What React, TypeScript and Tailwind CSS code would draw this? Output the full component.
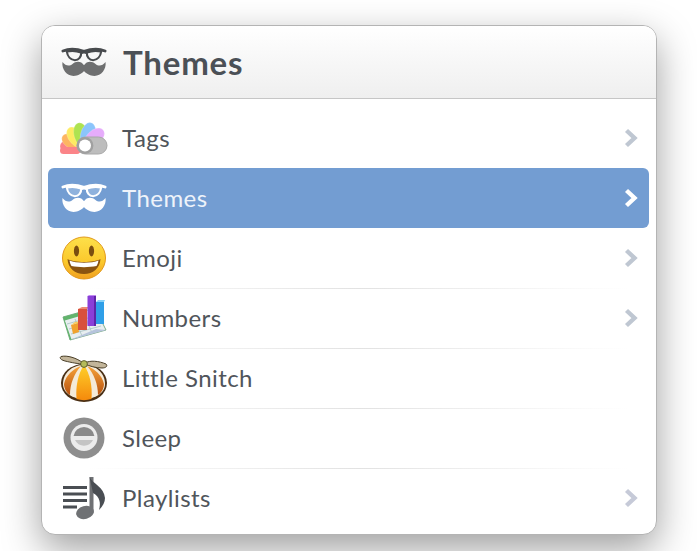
import React from 'react';

const MustacheIcon = ({ color, glasses, lens }: { color: string; glasses: string; lens: string }) => (
  <svg width="46" height="30" viewBox="0 0 48 31">
    {/* glasses */}
    <path d="M2 4C9 1.2 18 2.4 24 4.4C30 2.4 39 1.2 46 4" fill="none" stroke={glasses} strokeWidth="3" strokeLinecap="round" />
    <path d="M6 4.5C11 3.4 17 4 21 5.6C21.4 10 18.6 13.6 14.5 13.6C10 13.6 6.8 9.6 6 4.5Z" fill={lens} stroke={glasses} strokeWidth="2.2" />
    <path d="M42 4.5C37 3.4 31 4 27 5.6C26.6 10 29.4 13.6 33.5 13.6C38 13.6 41.2 9.6 42 4.5Z" fill={lens} stroke={glasses} strokeWidth="2.2" />
    <path d="M21 6.5Q24 5 27 6.5" fill="none" stroke={glasses} strokeWidth="2" />
    {/* mustache */}
    <path d="M24 19C21 14 15.5 14.5 12 17.5C9 20 5 20 1.5 15.5C0.5 23 6 30 13 30C18 30 22 27.5 24 25C26 27.5 30 30 35 30C42 30 47.5 23 46.5 15.5C43 20 39 20 36 17.5C32.5 14.5 27 14 24 19Z" fill={color} />
  </svg>
);

const petals = [
  { angle: -88, fill: '#fb8488' },
  { angle: -66, fill: '#fdb561' },
  { angle: -42, fill: '#fdeb62' },
  { angle: -16, fill: '#aee350' },
  { angle: 14, fill: '#8bc5fb' },
  { angle: 46, fill: '#e6acfb' },
];

const TagsIcon = () => (
  <svg width="48" height="33" viewBox="0 0 48 33">
    {petals.map((p) => (
      <ellipse key={p.fill} cx="25" cy="12.5" rx="7.5" ry="12.5" fill={p.fill} stroke="#ffffff" strokeOpacity="0.35" strokeWidth="0.5" transform={`rotate(${p.angle} 25 25)`} />
    ))}
    <rect x="0" y="25" width="20" height="7" rx="3.5" fill="#fb8488" />
    <rect x="17" y="15" width="30" height="17" rx="8.5" fill="#bdbdbd" stroke="#a8a8a8" />
    <circle cx="25" cy="23.5" r="8.4" fill="#a0a0a0" />
    <circle cx="25" cy="23.5" r="6" fill="#ffffff" />
  </svg>
);

const EmojiIcon = () => (
  <svg width="46" height="44" viewBox="0 0 46 44">
    <defs>
      <linearGradient id="emojiFace" x1="0" y1="0" x2="0" y2="1">
        <stop offset="0" stopColor="#fde04a" />
        <stop offset="0.6" stopColor="#fbc82c" />
        <stop offset="1" stopColor="#f0a020" />
      </linearGradient>
    </defs>
    <ellipse cx="23" cy="22" rx="21.5" ry="21" fill="url(#emojiFace)" stroke="#e29a1c" />
    <ellipse cx="15.5" cy="15" rx="2.6" ry="5.4" fill="#7a4d10" />
    <ellipse cx="30.5" cy="15" rx="2.6" ry="5.4" fill="#7a4d10" />
    <path d="M6.5 23C13 27 33 27 39.5 23C39 32 32 38 23 38C14 38 7 32 6.5 23Z" fill="#8a5410" />
    <path d="M8.5 24.5C15 27.5 31 27.5 37.5 24.5C37 27 36.5 28.5 35.5 30C28 31.5 18 31.5 10.5 30C9.5 28.5 9 27 8.5 24.5Z" fill="#ffffff" />
  </svg>
);

const NumbersIcon = () => (
  <svg width="46" height="46" viewBox="0 0 46 46">
    <path d="M2 22L34 13L45 35L9 45Z" fill="#e8eef0" stroke="#7fae8a" />
    <path d="M2 22L18 17.5L19 21L3.8 25.4L10.5 44.5L9 45Z" fill="#62b46c" />
    <path d="M6 29L34 21M8 34L37 26M10 39L40 31M14 24L21 41M24 21L31 38" stroke="#a7c2c2" strokeWidth="0.8" />
    <path d="M35 34L45 35L9 45Z" fill="#b6c4dc" />
    <path d="M10 30L17 28L18 37L12 39Z" fill="#f0a22e" />
    <path d="M10 30L14 27L21 26L17 28Z" fill="#f8cc5c" />
    <rect x="17" y="14" width="9" height="21" fill="#d8503c" />
    <path d="M17 14L21 12L29 12L26 14Z" fill="#ec8a72" />
    <rect x="26.5" y="1" width="8" height="30" fill="#8a3fd8" />
    <rect x="33" y="1" width="2" height="30" fill="#5f24a8" />
    <path d="M26.5 1L28 0L35 0L35 1Z" fill="#c08af0" />
    <rect x="35" y="7" width="8" height="22" fill="#2f9fe8" />
    <path d="M35 7L37 5L44 5L43 7Z" fill="#84d0f8" />
  </svg>
);

const SnitchIcon = () => (
  <svg width="50" height="47" viewBox="0 0 50 47">
    <defs>
      <linearGradient id="hatCenter" x1="0" y1="0" x2="0" y2="1">
        <stop offset="0" stopColor="#ffd02a" />
        <stop offset="1" stopColor="#f58a0c" />
      </linearGradient>
      <linearGradient id="hatSide" x1="0" y1="0" x2="0" y2="1">
        <stop offset="0" stopColor="#f6a33a" />
        <stop offset="1" stopColor="#b9520e" />
      </linearGradient>
    </defs>
    <ellipse cx="25" cy="28" rx="23" ry="19" fill="#4a2f14" />
    <path d="M4 29C4 18 13 10 25 10C37 10 46 18 46 29C46 38 36 44 25 44C14 44 4 38 4 29Z" fill="#f4ead8" />
    <path d="M22 11C14 14 7 20 5 29C5 34 8 38 11 40C11 29 15 19 22 11Z" fill="url(#hatSide)" />
    <path d="M28 11C36 14 43 20 45 29C45 34 42 38 39 40C39 29 35 19 28 11Z" fill="url(#hatSide)" />
    <path d="M25 10C19 19 16.5 31 17.5 44C22 45.5 28 45.5 32.5 44C33.5 31 31 19 25 10Z" fill="url(#hatCenter)" />
    <path d="M24 8C18 3 8 0 2 1.5C0 3 2 5 6 6C12 7.5 20 9 24 9Z" fill="#c2b59a" stroke="#4a3f28" strokeWidth="1" />
    <path d="M26 8C31 5 40 6 47 9C49 11 47 13 43 13C37 13 30 11 26 9Z" fill="#c2b59a" stroke="#4a3f28" strokeWidth="1" />
    <circle cx="25" cy="9" r="3.4" fill="#b4bb5a" stroke="#4a4a20" strokeWidth="0.8" />
  </svg>
);

const SleepIcon = () => (
  <svg width="42" height="42" viewBox="0 0 42 42">
    <circle cx="21" cy="21" r="20.5" fill="#8e8e8e" />
    <circle cx="21" cy="20.5" r="13.5" fill="#ececec" />
    <path d="M10.6 19A10.5 10.5 0 0 1 31.4 19Z" fill="#8a8a8a" />
    <path d="M12 23H30A10 10 0 0 1 12 23Z" fill="#c4c4c4" />
  </svg>
);

const PlaylistsIcon = () => (
  <svg width="44" height="43" viewBox="0 0 44 43">
    <rect x="1" y="9" width="24" height="3" fill="#4a4e53" />
    <rect x="1" y="15.5" width="24" height="3" fill="#4a4e53" />
    <rect x="1" y="22" width="24" height="3" fill="#4a4e53" />
    <rect x="1" y="28.5" width="14" height="3" fill="#4a4e53" />
    <ellipse cx="23" cy="35.5" rx="9" ry="6.5" fill="#6f7174" transform="rotate(-15 23 35.5)" />
    <rect x="27.5" y="0" width="4" height="36" fill="#6f7174" />
    <path d="M27.5 0C31 7 42 10 43 21C43 25 41 29 37 33C39 26 38 20 31 16Z" fill="#4a4e53" />
  </svg>
);

const Chevron = ({ color }: { color: string }) => (
  <svg width="14" height="20" viewBox="0 0 14 20">
    <path d="M2.5 2.5L10.5 10L2.5 17.5" fill="none" stroke={color} strokeWidth="4.4" />
  </svg>
);

const items = [
  { label: 'Tags', icon: <TagsIcon />, chevron: true },
  { label: 'Themes', icon: <MustacheIcon color="#ffffff" glasses="#ffffff" lens="#8fb2dd" />, chevron: true, active: true },
  { label: 'Emoji', icon: <EmojiIcon />, chevron: true },
  { label: 'Numbers', icon: <NumbersIcon />, chevron: true, line: true },
  { label: 'Little Snitch', icon: <SnitchIcon />, line: true },
  { label: 'Sleep', icon: <SleepIcon />, line: true },
  { label: 'Playlists', icon: <PlaylistsIcon />, chevron: true, line: true },
];

export default function App() {
  return (
    <div className="h-[551px] w-[697px] overflow-hidden bg-white pl-[41px] pt-[25px] font-['Lato','Open_Sans',sans-serif]">
      <div className="flex h-[510px] w-[616px] flex-col rounded-[14px] border border-[#b4b4b4] bg-white shadow-[0_14px_38px_rgba(0,0,0,0.38)]">
        <div className="flex h-[73px] shrink-0 items-center gap-[16px] rounded-t-[13px] border-b border-[#c6c6c6] bg-gradient-to-b from-white to-[#efefef] pl-[19px]">
          <MustacheIcon color="#6e6f70" glasses="#484b4e" lens="#f7f7f7" />
          <span className="text-[33px] leading-none font-bold tracking-[0.8px] text-[#4b5056]">Themes</span>
        </div>
        <div className="pt-[9px] pr-[7px] pl-[6px]">
          {items.map((item) => (
            <React.Fragment key={item.label}>
              {item.line && (
                <div className="mr-[20px] ml-[40px] h-px bg-gradient-to-r from-transparent via-[#e2e2e2] to-transparent" />
              )}
              <div
                className={
                  item.active
                    ? 'flex h-[60px] items-center rounded-[6px] bg-[#739dd2]'
                    : item.line
                      ? '-mt-px flex h-[60px] items-center'
                      : 'flex h-[60px] items-center'
                }
              >
                <div className="flex w-[74px] shrink-0 items-center pl-[11px]">
                  <div className="flex w-[50px] justify-center">{item.icon}</div>
                </div>
                <span
                  className={
                    item.active
                      ? 'flex-1 text-[24px] tracking-[0.45px] text-[#eef3fa]'
                      : 'flex-1 text-[24px] tracking-[0.45px] text-[#50555b]'
                  }
                >
                  {item.label}
                </span>
                {item.chevron && (
                  <div className="mr-[11px] flex">
                    <Chevron color={item.active ? '#ffffff' : item.label === 'Playlists' ? '#c6cad8' : '#bfc7d2'} />
                  </div>
                )}
              </div>
            </React.Fragment>
          ))}
        </div>
      </div>
    </div>
  );
}
